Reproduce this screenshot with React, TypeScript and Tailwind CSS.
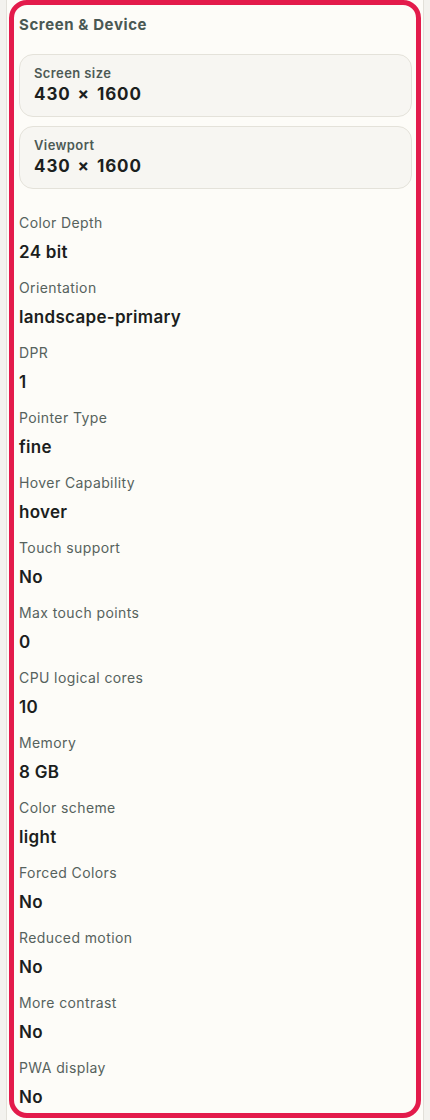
import React from 'react';

type Row = { label: string; value: string };

const rows: Row[] = [
  { label: 'Color Depth', value: '24 bit' },
  { label: 'Orientation', value: 'landscape-primary' },
  { label: 'DPR', value: '1' },
  { label: 'Pointer Type', value: 'fine' },
  { label: 'Hover Capability', value: 'hover' },
  { label: 'Touch support', value: 'No' },
  { label: 'Max touch points', value: '0' },
  { label: 'CPU logical cores', value: '10' },
  { label: 'Memory', value: '8 GB' },
  { label: 'Color scheme', value: 'light' },
  { label: 'Forced Colors', value: 'No' },
  { label: 'Reduced motion', value: 'No' },
  { label: 'More contrast', value: 'No' },
  { label: 'PWA display', value: 'No' },
];

const StatCard: React.FC<{ label: string; value: string }> = ({ label, value }) => (
  <div className="rounded-[14px] border border-[#e4e2da] bg-[#f7f6f2] pl-[14px] pt-[10px] pb-[11px]">
    <div className="text-[13px] leading-[16px] font-semibold tracking-[0.4px] text-[#4d5a55]">{label}</div>
    <div className="mt-[2px] text-[17px] leading-[22px] font-bold tracking-[0.9px] text-[#1c1f1e] [word-spacing:2px]">
      {value}
    </div>
  </div>
);

const App: React.FC = () => {
  return (
    <div
      className="w-full min-h-screen bg-[#f3f2ee] px-[6px]"
      style={{ fontFamily: 'Inter, "Noto Sans", sans-serif' }}
    >
      <div className="border-x border-[#e2e0d9] bg-[#fdfcf8] px-[2px] pb-[2px]">
        {/* highlighted section */}
        <div className="rounded-[18px] border-[5px] border-[#e31b4b] pl-[5px] pr-[4px] pt-[10px] pb-[5px]">
          <h2 className="text-[15px] leading-[20px] font-bold tracking-[0.6px] text-[#4a5853]">Screen &amp; Device</h2>

          <div className="mt-[19px] flex flex-col gap-[9px]">
            <StatCard label="Screen size" value="430 × 1600" />
            <StatCard label="Viewport" value="430 × 1600" />
          </div>

          <div className="mt-[25px] flex flex-col gap-[16px]">
            {rows.map((r) => (
              <div key={r.label}>
                <div className="text-[14px] leading-[18px] tracking-[0.4px] text-[#56625d]">{r.label}</div>
                <div className="mt-[9px] text-[17px] leading-[22px] font-semibold tracking-[0.3px] text-[#1b1e1d]">
                  {r.value}
                </div>
              </div>
            ))}
          </div>
        </div>
      </div>
    </div>
  );
};

export default App;
